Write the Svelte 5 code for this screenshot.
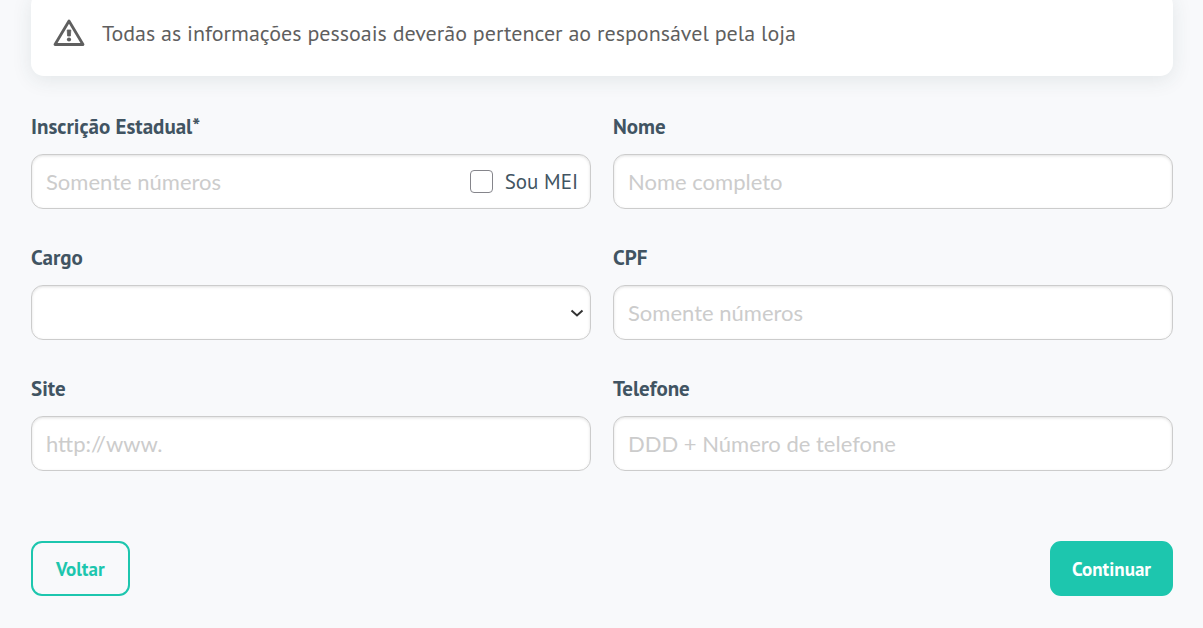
<script>
  let form = $state({
    inscricao: '',
    mei: false,
    nome: '',
    cargo: '',
    cpf: '',
    site: '',
    telefone: ''
  });

  const cargos = ['Proprietário', 'Sócio', 'Gerente', 'Funcionário'];

  function onSubmit(e) {
    e.preventDefault();
  }
</script>

<main>
  <div class="notice">
    <svg class="warning" viewBox="0 0 32 28" aria-hidden="true">
      <path d="M16 2 L30 25.5 H2 Z" fill="none" stroke="currentColor" stroke-width="2.8" stroke-linejoin="round" />
      <path d="M14.2 11 H17.8 L17.4 17 H14.6 Z" fill="currentColor" stroke="currentColor" stroke-width="0.8" stroke-linejoin="round" />
      <circle cx="16" cy="20.5" r="2.1" fill="currentColor" />
    </svg>
    <p>Todas as informações pessoais deverão pertencer ao responsável pela loja</p>
  </div>

  <form onsubmit={onSubmit}>
    <div class="fields">
      <div class="field">
        <label for="inscricao">Inscrição Estadual*</label>
        <div class="control group">
          <input id="inscricao" type="text" placeholder="Somente números" bind:value={form.inscricao} />
          <label class="check" for="mei">
            <input id="mei" type="checkbox" bind:checked={form.mei} />
            <span>Sou MEI</span>
          </label>
        </div>
      </div>

      <div class="field">
        <label for="nome">Nome</label>
        <input class="control" id="nome" type="text" placeholder="Nome completo" bind:value={form.nome} />
      </div>

      <div class="field">
        <label for="cargo">Cargo</label>
        <div class="control group select">
          <select id="cargo" bind:value={form.cargo}>
            <option value=""></option>
            {#each cargos as cargo}
              <option value={cargo}>{cargo}</option>
            {/each}
          </select>
          <svg class="arrow" viewBox="0 0 14 8" aria-hidden="true">
            <path d="M1.5 1.5 L7 6.5 L12.5 1.5" fill="none" stroke="currentColor" stroke-width="2" />
          </svg>
        </div>
      </div>

      <div class="field">
        <label for="cpf">CPF</label>
        <input class="control" id="cpf" type="text" placeholder="Somente números" bind:value={form.cpf} />
      </div>

      <div class="field">
        <label for="site">Site</label>
        <input class="control" id="site" type="text" placeholder="http://www." bind:value={form.site} />
      </div>

      <div class="field">
        <label for="telefone">Telefone</label>
        <input class="control" id="telefone" type="tel" placeholder="DDD + Número de telefone" bind:value={form.telefone} />
      </div>
    </div>

    <footer>
      <button class="back" type="button">Voltar</button>
      <button class="next" type="submit">Continuar</button>
    </footer>
  </form>
</main>

<style>
:global(body) {
  background: #f8f9fb;
}

main {
  display: flow-root;
  padding: 0 30px 32px 31px;
  color: #415462;
  font-family: "PT Sans", "Noto Sans", sans-serif;
  font-size: 21px;
}

.notice {
  display: flex;
  align-items: center;
  gap: 17px;
  margin-top: -8px;
  padding: 23px 22px 25px;
  border-radius: 13px;
  background: #fff;
  box-shadow: 0 4px 20px rgba(40, 70, 70, 0.1);
  color: #5f5f5f;
  font-size: 22px;
  line-height: 36px;
}

.notice p {
  margin: 0;
}

.warning {
  flex: none;
  width: 32px;
  height: 28px;
}

.fields {
  display: grid;
  grid-template-columns: 1fr 1fr;
  gap: 35px 22px;
  margin-top: 37px;
}

.field {
  display: flex;
  flex-direction: column;
  gap: 13px;
  min-width: 0;
}

.field > label {
  font-weight: bold;
  line-height: 28px;
}

.control {
  box-sizing: border-box;
  width: 100%;
  height: 55px;
  padding: 0 14px;
  border: 1px solid #ccc;
  border-radius: 12px;
  background: #fff;
  box-shadow: inset 0 1px 3px rgba(0, 0, 0, 0.12);
  color: #415462;
  font-family: Lato, sans-serif;
  font-size: 22px;
}

.group {
  display: flex;
  align-items: center;
}

.group input[type="text"] {
  flex: 1;
  min-width: 0;
  padding: 0;
  border: 0;
  background: none;
  color: inherit;
  font: inherit;
}

input::placeholder {
  color: #ccc;
  opacity: 1;
}

.check {
  display: flex;
  align-items: center;
  gap: 12px;
  margin-right: -2px;
  font-family: "PT Sans", "Noto Sans", sans-serif;
  font-size: 21px;
}

.check input {
  appearance: none;
  width: 23px;
  height: 23px;
  margin: 0;
  border: 1px solid #85858b;
  border-radius: 4px;
  background: #fff;
}

.check input:checked {
  background: #1dc6ae;
}

.select {
  padding: 0 6px 0 0;
}

.select select {
  flex: 1;
  align-self: stretch;
  margin-right: -14px;
  padding: 0 14px;
  appearance: none;
  border: 0;
  border-radius: 12px;
  background: none;
  color: inherit;
  font: inherit;
}

.arrow {
  width: 14px;
  height: 8px;
  color: #333;
  pointer-events: none;
}

footer {
  display: flex;
  justify-content: space-between;
  margin-top: 70px;
}

button {
  height: 55px;
  padding: 0 20px;
  border: 2px solid #1dc6ae;
  border-radius: 11px;
  font-family: "PT Sans", "Noto Sans", sans-serif;
  font-size: 19px;
  font-weight: bold;
  cursor: pointer;
}

.back {
  padding: 0 23px;
  background: none;
  color: #1dc6ae;
}

.next {
  background: #1dc6ae;
  color: #fff;
}
</style>
